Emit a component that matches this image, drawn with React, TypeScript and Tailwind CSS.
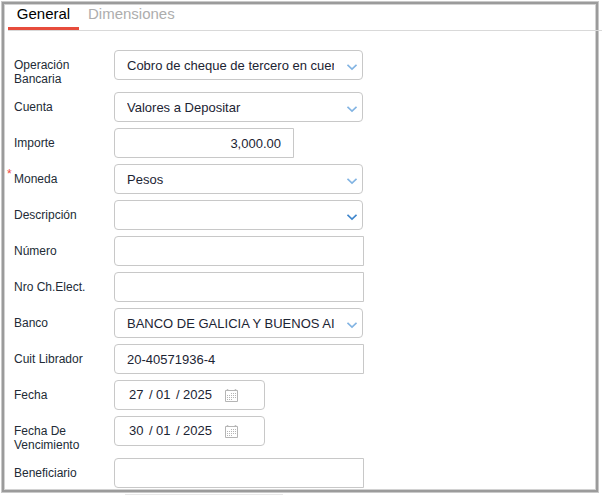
import type { ReactNode } from "react";

const fieldStyle =
  "h-[30px] border border-[#c8c8c8] bg-white text-[13px] text-[#1c2433] outline-none focus:border-[#7aaee0]";

function Row({
  id,
  label,
  required,
  children,
}: {
  id: string;
  label: string;
  required?: boolean;
  children: ReactNode;
}) {
  return (
    <div className="flex items-start">
      <label
        htmlFor={id}
        className="relative w-[100px] shrink-0 pt-2 pr-5 text-[12px] leading-[14px] text-[#222b36]"
      >
        {required && (
          <span className="absolute top-[3px] -left-[7px] text-[12px] text-[#f0483e]">*</span>
        )}
        {label}
      </label>
      {children}
    </div>
  );
}

function SelectField({ id, value, active }: { id: string; value: string; active?: boolean }) {
  return (
    <div className="relative w-[249px]">
      <select
        id={id}
        defaultValue={value}
        className={`${fieldStyle} block w-full appearance-none rounded pt-0.5 pr-7 pl-3`}
      >
        <option value={value}>{value}</option>
      </select>
      <svg
        viewBox="0 0 10 7"
        fill="none"
        strokeWidth="1.6"
        className={
          active
            ? "pointer-events-none absolute top-[14px] right-[6px] h-[7px] w-[10px] stroke-[#3f86cc]"
            : "pointer-events-none absolute top-[14px] right-[6px] h-[7px] w-[10px] stroke-[#82b4e3]"
        }
      >
        <path d="M0.5 0.8 5 5.1 9.5 0.8" />
      </svg>
    </div>
  );
}

function TextField({ id, value = "" }: { id: string; value?: string }) {
  return (
    <input
      id={id}
      type="text"
      defaultValue={value}
      className={`${fieldStyle} w-[250px] rounded-l px-3`}
    />
  );
}

function CalendarIcon() {
  return (
    <svg viewBox="0 0 13 13" fill="none" stroke="#b5b5b5" className="h-[13px] w-[13px]">
      <path d="M0.5 1.5H12.5V12.5H0.5Z" />
      <path d="M1.5 1.5 2.5 0.2 3.7 1.5M9.3 1.5 10.5 0.2 11.7 1.5" />
      <path d="M6 4.5H11M2 6.5H11M2 8.5H11M2 10.5H8" strokeDasharray="1 1" />
    </svg>
  );
}

function DateField({ id, day, month, year }: { id: string; day: string; month: string; year: string }) {
  return (
    <div className={`${fieldStyle} flex w-[151px] items-center rounded pl-[14px]`}>
      <input id={id} aria-label="Día" defaultValue={day} className="w-5 outline-none" />
      <span className="w-[7px]">/</span>
      <input aria-label="Mes" defaultValue={month} className="w-5 outline-none" />
      <span className="w-[7px]">/</span>
      <input aria-label="Año" defaultValue={year} className="w-[42px] outline-none" />
      <button type="button" aria-label="Abrir calendario" className="cursor-pointer">
        <CalendarIcon />
      </button>
    </div>
  );
}

export default function App() {
  return (
    <main className="bg-white pt-px pr-[3px] pl-px font-['Liberation_Sans',Arial,sans-serif]">
      <div className="border border-[#c9c9c9]">
        <div className="border-2 border-[#9b9b9b]">
          <div className="border border-[#d2d2d2] pb-px">
            {/* the rule under the tabs runs past the frame */}
            <nav className="-mr-[7px] ml-[3px] flex h-[26px] border-b border-[#d9d9d9] text-[15px] leading-[18px]">
              <button
                type="button"
                className="h-[25px] w-[71px] cursor-pointer border-b-3 border-[#e74c3c] pb-1 text-black"
              >
                General
              </button>
              <button type="button" className="h-[25px] cursor-pointer px-[9px] pb-[7px] text-[#adadad]">
                Dimensiones
              </button>
            </nav>

            <form className="flex flex-col gap-[6px] pt-[19px] pl-[9px]">
              <Row id="operacion" label="Operación Bancaria">
                <SelectField id="operacion" value="Cobro de cheque de tercero en cuenta" />
              </Row>
              <Row id="cuenta" label="Cuenta">
                <SelectField id="cuenta" value="Valores a Depositar" />
              </Row>
              <Row id="importe" label="Importe">
                <input
                  id="importe"
                  type="text"
                  defaultValue="3,000.00"
                  className={`${fieldStyle} w-[180px] rounded-l px-3 text-right`}
                />
              </Row>
              <Row id="moneda" label="Moneda" required>
                <SelectField id="moneda" value="Pesos" />
              </Row>
              <Row id="descripcion" label="Descripción">
                <SelectField id="descripcion" value="" active />
              </Row>
              <Row id="numero" label="Número">
                <TextField id="numero" />
              </Row>
              <Row id="cheque" label="Nro Ch.Elect.">
                <TextField id="cheque" />
              </Row>
              <Row id="banco" label="Banco">
                <SelectField id="banco" value="BANCO DE GALICIA Y BUENOS AIRES" />
              </Row>
              <Row id="cuit" label="Cuit Librador">
                <TextField id="cuit" value="20-40571936-4" />
              </Row>
              <Row id="fecha" label="Fecha">
                <DateField id="fecha" day="27" month="01" year="2025" />
              </Row>
              <Row id="vencimiento" label="Fecha De Vencimiento">
                <DateField id="vencimiento" day="30" month="01" year="2025" />
              </Row>
              <Row id="beneficiario" label="Beneficiario">
                <TextField id="beneficiario" />
              </Row>
            </form>
          </div>
        </div>
      </div>
      <div className="mt-px ml-[124px] h-px w-[158px] bg-[#e8e8e8]" />
    </main>
  );
}
